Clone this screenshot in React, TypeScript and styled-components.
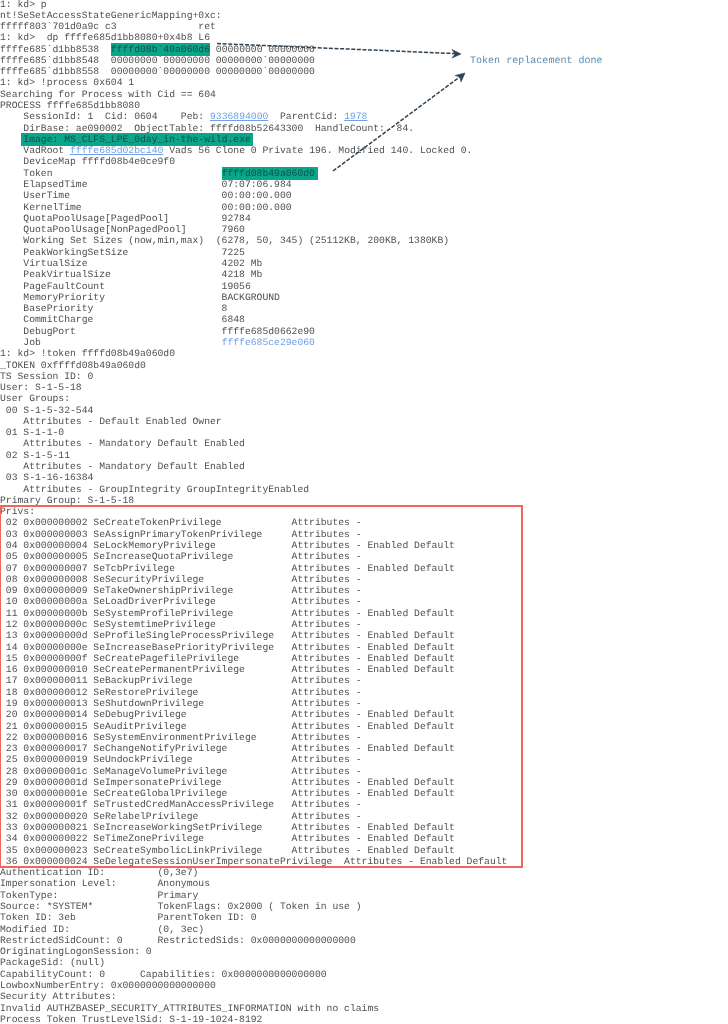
import React from "react";
import styled, { createGlobalStyle } from "styled-components";

const Global = createGlobalStyle`
  html, body { margin: 0; padding: 0; background: #fff; }
  body { overflow: hidden; }
`;

const Page = styled.div`
  position: relative;
  width: 728px;
  height: 1024px;
  overflow: hidden;
  background: #fff;
`;

const Terminal = styled.div`
  font-family: "Liberation Mono", monospace;
  font-size: 9.72px;
  line-height: 11.285px;
  color: #505050;
  text-rendering: geometricPrecision;
  filter: blur(0.35px);
`;

const Line = styled.div`
  height: 11.285px;
  white-space: pre;
`;

const FirstLine = styled(Line)`
  height: 9.8px;
  line-height: 9.8px;
`;

const Mark = styled.span<{ $before?: number; $after?: number }>`
  background: #0ba58a;
  color: #0f5049;
  padding: 1px ${(p) => p.$after ?? 0}px 1px ${(p) => p.$before ?? 0}px;
  margin: 0 ${(p) => -(p.$after ?? 0)}px 0 ${(p) => -(p.$before ?? 0)}px;
`;

const Ref = styled.span<{ $plain?: boolean }>`
  color: #6f9fe6;
  text-decoration: ${(p) => (p.$plain ? "none" : "underline")};
`;

const PrivBox = styled.section`
  width: 522px;
  outline: 2px solid #f0655c;
  outline-offset: -1px;
`;

const Overlay = styled.svg`
  position: absolute;
  inset: 0;
  pointer-events: none;
  filter: blur(0.25px);
`;

const Note = styled.div`
  position: absolute;
  left: 470px;
  top: 56px;
  font-family: "Liberation Mono", monospace;
  font-size: 10.05px;
  line-height: 12px;
  color: #5f8cad;
  white-space: pre;
  text-rendering: geometricPrecision;
  filter: blur(0.3px);
`;

const top: React.ReactNode[] = [
  "nt!SeSetAccessStateGenericMapping+0xc:",
  "fffff803`701d0a9c c3              ret",
  "1: kd>  dp ffffe685d1bb8080+0x4b8 L6",
  <>ffffe685`d1bb8538  <Mark>ffffd08b`49a060d6</Mark> 00000000`00000000</>,
  "ffffe685`d1bb8548  00000000`00000000 00000000`00000000",
  "ffffe685`d1bb8558  00000000`00000000 00000000`00000000",
  "1: kd> !process 0x604 1",
  "Searching for Process with Cid == 604",
  "PROCESS ffffe685d1bb8080",
  <>    SessionId: 1  Cid: 0604    Peb: <Ref>9336894000</Ref>  ParentCid: <Ref>1978</Ref></>,
  "    DirBase: ae090002  ObjectTable: ffffd08b52643300  HandleCount:  84.",
  <>    <Mark $before={2} $after={2}>Image: MS_CLFS_LPE_0day_in-the-wild.exe</Mark></>,
  <>    VadRoot <Ref>ffffe685d02bc140</Ref> Vads 56 Clone 0 Private 196. Modified 140. Locked 0.</>,
  "    DeviceMap ffffd08b4e0ce9f0",
  <>    Token                             <Mark $after={3}>ffffd08b49a060d0</Mark></>,
  "    ElapsedTime                       07:07:06.984",
  "    UserTime                          00:00:00.000",
  "    KernelTime                        00:00:00.000",
  "    QuotaPoolUsage[PagedPool]         92784",
  "    QuotaPoolUsage[NonPagedPool]      7960",
  "    Working Set Sizes (now,min,max)  (6278, 50, 345) (25112KB, 200KB, 1380KB)",
  "    PeakWorkingSetSize                7225",
  "    VirtualSize                       4202 Mb",
  "    PeakVirtualSize                   4218 Mb",
  "    PageFaultCount                    19056",
  "    MemoryPriority                    BACKGROUND",
  "    BasePriority                      8",
  "    CommitCharge                      6848",
  "    DebugPort                         ffffe685d0662e90",
  <>    Job                               <Ref $plain>ffffe685ce29e060</Ref></>,
  "1: kd> !token ffffd08b49a060d0",
  "_TOKEN 0xffffd08b49a060d0",
  "TS Session ID: 0",
  "User: S-1-5-18",
  "User Groups:",
  " 00 S-1-5-32-544",
  "    Attributes - Default Enabled Owner",
  " 01 S-1-1-0",
  "    Attributes - Mandatory Default Enabled",
  " 02 S-1-5-11",
  "    Attributes - Mandatory Default Enabled",
  " 03 S-1-16-16384",
  "    Attributes - GroupIntegrity GroupIntegrityEnabled",
  "Primary Group: S-1-5-18",
];

const privileges: [string, string, string, boolean][] = [
  ["02", "02", "SeCreateTokenPrivilege", false],
  ["03", "03", "SeAssignPrimaryTokenPrivilege", false],
  ["04", "04", "SeLockMemoryPrivilege", true],
  ["05", "05", "SeIncreaseQuotaPrivilege", false],
  ["07", "07", "SeTcbPrivilege", true],
  ["08", "08", "SeSecurityPrivilege", false],
  ["09", "09", "SeTakeOwnershipPrivilege", false],
  ["10", "0a", "SeLoadDriverPrivilege", false],
  ["11", "0b", "SeSystemProfilePrivilege", true],
  ["12", "0c", "SeSystemtimePrivilege", false],
  ["13", "0d", "SeProfileSingleProcessPrivilege", true],
  ["14", "0e", "SeIncreaseBasePriorityPrivilege", true],
  ["15", "0f", "SeCreatePagefilePrivilege", true],
  ["16", "10", "SeCreatePermanentPrivilege", true],
  ["17", "11", "SeBackupPrivilege", false],
  ["18", "12", "SeRestorePrivilege", false],
  ["19", "13", "SeShutdownPrivilege", false],
  ["20", "14", "SeDebugPrivilege", true],
  ["21", "15", "SeAuditPrivilege", true],
  ["22", "16", "SeSystemEnvironmentPrivilege", false],
  ["23", "17", "SeChangeNotifyPrivilege", true],
  ["25", "19", "SeUndockPrivilege", false],
  ["28", "1c", "SeManageVolumePrivilege", false],
  ["29", "1d", "SeImpersonatePrivilege", true],
  ["30", "1e", "SeCreateGlobalPrivilege", true],
  ["31", "1f", "SeTrustedCredManAccessPrivilege", false],
  ["32", "20", "SeRelabelPrivilege", false],
  ["33", "21", "SeIncreaseWorkingSetPrivilege", true],
  ["34", "22", "SeTimeZonePrivilege", true],
  ["35", "23", "SeCreateSymbolicLinkPrivilege", true],
  ["36", "24", "SeDelegateSessionUserImpersonatePrivilege", true],
];

const bottom = [
  "Authentication ID:         (0,3e7)",
  "Impersonation Level:       Anonymous",
  "TokenType:                 Primary",
  "Source: *SYSTEM*           TokenFlags: 0x2000 ( Token in use )",
  "Token ID: 3eb              ParentToken ID: 0",
  "Modified ID:               (0, 3ec)",
  "RestrictedSidCount: 0      RestrictedSids: 0x0000000000000000",
  "OriginatingLogonSession: 0",
  "PackageSid: (null)",
  "CapabilityCount: 0      Capabilities: 0x0000000000000000",
  "LowboxNumberEntry: 0x0000000000000000",
  "Security Attributes:",
  "Invalid AUTHZBASEP_SECURITY_ATTRIBUTES_INFORMATION with no claims",
  "Process Token TrustLevelSid: S-1-19-1024-8192",
];

const privLine = ([idx, hex, name, on]: [string, string, string, boolean]) =>
  ` ${idx} 0x0000000${hex} ${name.padEnd(34, " ")}${name.length > 33 ? "  " : ""}Attributes - ${on ? "Enabled Default" : ""}`;

export default function App() {
  return (
    <Page>
      <Global />
      <Terminal>
        <FirstLine>1: kd&gt; p</FirstLine>
        {top.map((l, i) => (
          <Line key={i}>{l}</Line>
        ))}
        <PrivBox>
          <Line>Privs:</Line>
          {privileges.map((p) => (
            <Line key={p[0]}>{privLine(p)}</Line>
          ))}
        </PrivBox>
        {bottom.map((l, i) => (
          <Line key={i}>{l}</Line>
        ))}
      </Terminal>
      <Overlay width="728" height="1024" viewBox="0 0 728 1024">
        <g fill="none" stroke="#2f4353" strokeWidth="1.5" strokeDasharray="4 1.6">
          <line x1="217" y1="43.5" x2="456" y2="53.6" />
          <line x1="333" y1="171" x2="461" y2="76" />
        </g>
        <path d="M461 54 L452 49.5 L455 54 L452 58 Z" fill="#2f4353" stroke="#2f4353" strokeWidth="0.6" />
        <path d="M465 73 L455 75.5 L460 77 L461 82 Z" fill="#2f4353" stroke="#2f4353" strokeWidth="0.6" />
      </Overlay>
      <Note>Token replacement done</Note>
    </Page>
  );
}
